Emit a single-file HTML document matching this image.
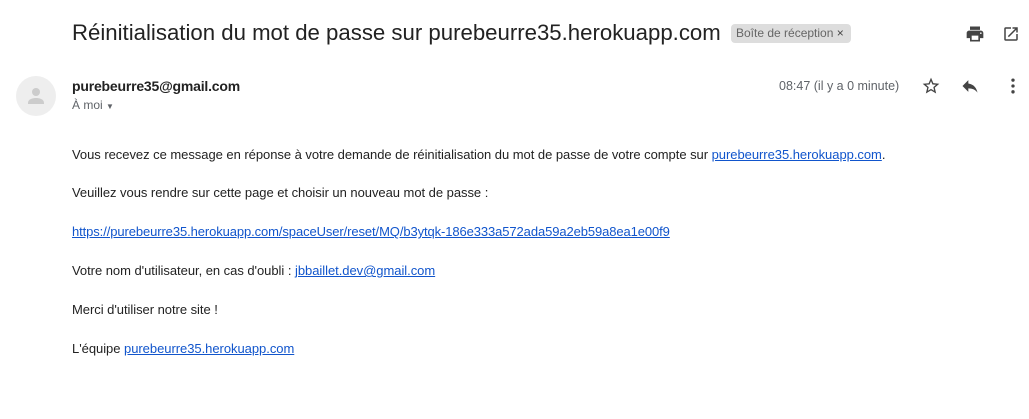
<!DOCTYPE html>
<html><head><meta charset="utf-8"><style>
body{margin:0;width:1029px;height:419px;background:#fff;font-family:"Liberation Sans",Arial,sans-serif;position:relative;overflow:hidden;color:#222}
.a{position:absolute;white-space:nowrap}
a{color:#15c;text-decoration:underline}
.p{font-size:13px;left:72px;color:#222;letter-spacing:-0.04px}
</style></head><body>
<div class="a" style="left:72px;top:20px;font-size:22.2px;color:#222">Réinitialisation du mot de passe sur purebeurre35.herokuapp.com</div>
<div class="a" style="left:731px;top:24px;height:19px;line-height:19px;padding:0 7px 0 5px;background:#ddd;border-radius:4px;font-size:12px;color:#666">Boîte de réception <span style="color:#444">×</span></div>
<svg class="a" style="left:965px;top:24px" width="20" height="20" viewBox="0 0 24 24"><path fill="#444" d="M19 8H5c-1.66 0-3 1.34-3 3v6h4v4h12v-4h4v-6c0-1.66-1.34-3-3-3zm-3 11H8v-5h8v5zm3-7c-.55 0-1-.45-1-1s.45-1 1-1 1 .45 1 1-.45 1-1 1zm-1-9H6v4h12V3z"/></svg>
<svg class="a" style="left:1002px;top:25px" width="18" height="18" viewBox="0 0 24 24"><path fill="#444" d="M19 19H5V5h7V3H5a2 2 0 00-2 2v14a2 2 0 002 2h14c1.1 0 2-.9 2-2v-7h-2v7zM14 3v2h3.59l-9.83 9.83 1.41 1.41L19 6.41V10h2V3h-7z"/></svg>
<div class="a" style="left:16px;top:76px;width:40px;height:40px;border-radius:50%;background:#eee"><svg width="40" height="40" viewBox="0 0 40 40"><circle cx="20" cy="16" r="4" fill="#ccc"/><path d="M12 27c0-4 5-5 8-5s8 1 8 5v1H12z" fill="#ccc"/></svg></div>
<div class="a" style="left:72px;top:78px;font-size:14px;font-weight:bold;color:#222;letter-spacing:-0.2px">purebeurre35@gmail.com</div>
<div class="a" style="left:72px;top:98px;font-size:12px;color:#5f6368">À moi <span style="font-size:8px">▼</span></div>
<div class="a" style="left:779px;top:79px;font-size:12.5px;color:#5f6368">08:47 (il y a 0 minute)</div>
<svg class="a" style="left:921px;top:76px" width="20" height="20" viewBox="0 0 24 24"><path fill="#444" d="M22 9.24l-7.19-.62L12 2 9.19 8.63 2 9.24l5.46 4.73L5.82 21 12 17.27 18.18 21l-1.63-7.03L22 9.24zM12 15.4l-3.76 2.27 1-4.28-3.32-2.88 4.38-.38L12 6.1l1.71 4.04 4.38.38-3.32 2.88 1 4.28L12 15.4z"/></svg>
<svg class="a" style="left:960px;top:76px" width="20" height="20" viewBox="0 0 24 24"><path fill="#444" d="M10 9V5l-7 7 7 7v-4.1c5 0 8.5 1.6 11 5.1-1-5-4-10-11-11z"/></svg>
<svg class="a" style="left:1003px;top:76px" width="20" height="20" viewBox="0 0 24 24"><circle cx="12" cy="5" r="2" fill="#444"/><circle cx="12" cy="12" r="2" fill="#444"/><circle cx="12" cy="19" r="2" fill="#444"/></svg>
<div class="a p" style="top:147px">Vous recevez ce message en réponse à votre demande de réinitialisation du mot de passe de votre compte sur <a>purebeurre35.herokuapp.com</a>.</div>
<div class="a p" style="top:185px">Veuillez vous rendre sur cette page et choisir un nouveau mot de passe :</div>
<div class="a p" style="top:224px;letter-spacing:-0.1px"><a>https://purebeurre35.herokuapp.com/spaceUser/reset/MQ/b3ytqk-186e333a572ada59a2eb59a8ea1e00f9</a></div>
<div class="a p" style="top:263px">Votre nom d'utilisateur, en cas d'oubli : <a>jbbaillet.dev@gmail.com</a></div>
<div class="a p" style="top:302px">Merci d'utiliser notre site !</div>
<div class="a p" style="top:341px">L'équipe <a>purebeurre35.herokuapp.com</a></div>
</body></html>
